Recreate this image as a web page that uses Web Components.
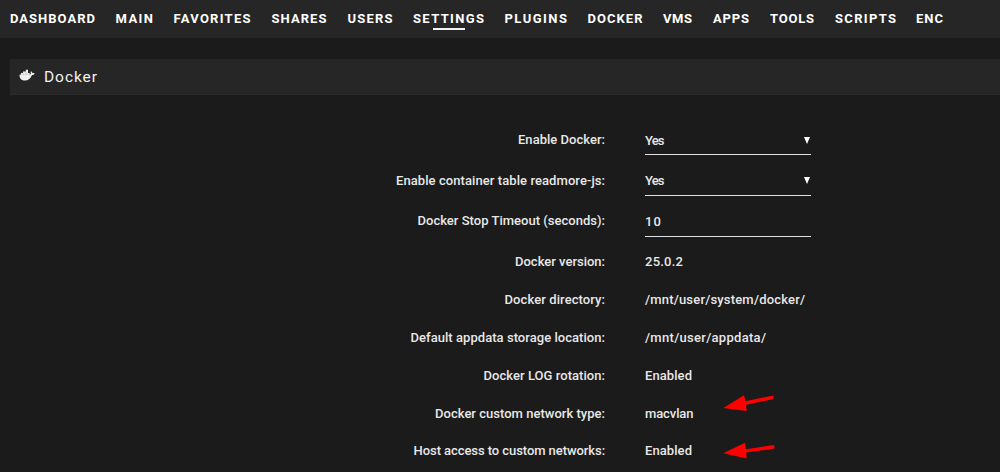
<!DOCTYPE html>
<html lang="en">
<head>
<meta charset="utf-8">
<title>Docker settings</title>
<style>
  body {
    margin: 0;
    height: 472px;
    overflow: hidden;
    background: #1b1b1b;
    color: #e8e8e8;
    font-family: Roboto, "Noto Sans", sans-serif;
    font-weight: 500;
    font-size: 13px;
  }
</style>
</head>
<body>
<docker-settings></docker-settings>
<script>
// Text set to an exact width by spreading the letter spacing.
class FitText extends HTMLElement {
  constructor() {
    super();
    this.attachShadow({ mode: "open" }).innerHTML = `
      <style>
        :host { display: inline-block; white-space: nowrap; }
        span { display: inline-block; }
      </style>
      <span><slot></slot></span>
    `;
  }

  connectedCallback() {
    const width = Number(this.getAttribute("width"));
    const span = this.shadowRoot.querySelector("span");
    const natural = span.getBoundingClientRect().width;
    const spacing = (width - natural) / (this.textContent.length - 1);
    span.style.letterSpacing = spacing.toFixed(3) + "px";
    this.style.width = width + "px";
  }
}

class NavItem extends HTMLElement {
  constructor() {
    super();
    this.attachShadow({ mode: "open" }).innerHTML = `
      <style>
        :host {
          display: flex;
          flex-direction: column;
          align-items: center;
          height: 20px;
          font-weight: bold;
          font-size: 13px;
          line-height: 15px;
          color: #fff;
        }
        i { display: none; width: 32px; height: 2px; margin-top: 2px; background: #f2f2f2; }
        :host([active]) i { display: block; }
      </style>
      <slot></slot><i></i>
    `;
  }
}

class SettingRow extends HTMLElement {
  constructor() {
    super();
    this.attachShadow({ mode: "open" }).innerHTML = `
      <style>
        :host { display: flex; height: 37.9px; line-height: 18px; gap: 40px; }
        .label { width: 605px; text-align: right; }
        .value { width: 166px; }
        :host([field]) { height: 41px; }
        :host([field]:not([select])) { height: 40px; }
        :host([field]:not([select])) .label { margin-top: -1px; }
        :host([field]) .value {
          box-sizing: border-box;
          display: flex;
          justify-content: space-between;
          height: 24px;
          border-bottom: 1px solid #e0e0e0;
        }
        :host(:first-child) .value { padding-top: 1px; }
        svg { display: none; width: 6px; height: 7px; margin: 5px 1px 0 0; }
        :host([select]) svg { display: block; }
      </style>
      <div class="label"><slot name="label"></slot></div>
      <div class="value">
        <slot></slot>
        <svg viewBox="0 0 6 7"><path d="M0 0H6L3 7Z" fill="#fff"/></svg>
      </div>
    `;
  }
}

class DockerSettings extends HTMLElement {
  constructor() {
    super();
    this.attachShadow({ mode: "open" }).innerHTML = `
      <style>
        :host { display: block; position: relative; height: 472px; }
        nav {
          box-sizing: border-box;
          display: flex;
          height: 38px;
          padding: 11px 0 0 10px;
          background: #262626;
        }
        header {
          box-sizing: border-box;
          display: flex;
          align-items: center;
          height: 36px;
          margin: 21px 0 0 10px;
          padding-left: 9px;
          background: #262626;
          border-bottom: 1px solid #2b2b2b;
          font-size: 15.5px;
          font-weight: 400;
          color: #f2f2f2;
        }
        header svg { width: 16px; height: 13px; margin: 0 9px 2px 0; }
        main { padding-top: 36px; }
        .arrows { position: absolute; left: 720px; top: 390px; }
      </style>
      <nav>
        ${this.items().map(([name, width, gap]) => `<nav-item style="margin-right:${gap}px"${name === "SETTINGS" ? " active" : ""}><fit-text width="${width}">${name}</fit-text></nav-item>`).join("")}
      </nav>
      <header>
        <svg viewBox="0 0 16 13" fill="#f2f2f2">
          <path d="M0.6 5.6H2V4H4V2.4H6.8V0.8H9V4H10.6V5.4C11.5 5.4 12 5 11.8 4.2C11.5 3.2 11.8 2.6 12.2 2.2C13 2.8 13.3 3.4 13.4 4.2C14.3 4 15 4.1 15.6 4.5C15.2 5.6 14.2 6 13 6C11.8 9.4 9.4 11.6 5.8 11.6C2.3 11.6 0.3 9.5 0.6 5.6Z"/>
          <path d="M2 5.6H10.6M4 4V5.6M6.8 2.4V5.6M2 4H9" stroke="#aaa" stroke-width=".3"/>
        </svg>
        <fit-text width="53">Docker</fit-text>
      </header>
      <main>
        ${this.rows().map(([label, lw, value, vw, attrs = ""]) => `
          <setting-row ${attrs}>
            <fit-text slot="label" width="${lw}">${label}</fit-text>
            <fit-text width="${vw}">${value}</fit-text>
          </setting-row>`).join("")}
      </main>
      <svg class="arrows" width="60" height="75" fill="#f00">
        <path d="M3.3 18L24 5.3L25.5 11.2L53.3 5.4L53.8 9L26 14.8L26.7 21Z"/>
        <path d="M3.3 63.3L25 52.7L26 59.2L54 55L54.6 58.6L26.3 62.6L26.7 68.5Z"/>
      </svg>
    `;
  }

  // name, text width, gap to the next item
  items() {
    return [
      ["DASHBOARD", 85, 20.5], ["MAIN", 37.5, 20.5], ["FAVORITES", 77, 21],
      ["SHARES", 55, 21], ["USERS", 45, 20.5], ["SETTINGS", 71, 20.5],
      ["PLUGINS", 62.5, 20.5], ["DOCKER", 55, 20.5], ["VMS", 29, 21],
      ["APPS", 36, 21], ["TOOLS", 44, 21], ["SCRIPTS", 61, 20], ["ENC", 27, 0],
    ];
  }

  rows() {
    return [
      ["Enable Docker:", 87, "Yes", 19.5, "field select"],
      ["Enable container table readmore-js:", 209, "Yes", 19.5, "field select"],
      ["Docker Stop Timeout (seconds):", 187.5, "10", 16, "field"],
      ["Docker version:", 90, "25.0.2", 38],
      ["Docker directory:", 100.5, "/mnt/user/system/docker/", 160],
      ["Default appdata storage location:", 194.5, "/mnt/user/appdata/", 121],
      ["Docker LOG rotation:", 121.5, "Enabled", 47],
      ["Docker custom network type:", 170, "macvlan", 48.5],
      ["Host access to custom networks:", 191.5, "Enabled", 47],
    ];
  }
}

customElements.define("fit-text", FitText);
customElements.define("nav-item", NavItem);
customElements.define("setting-row", SettingRow);
customElements.define("docker-settings", DockerSettings);
</script>
</body>
</html>
